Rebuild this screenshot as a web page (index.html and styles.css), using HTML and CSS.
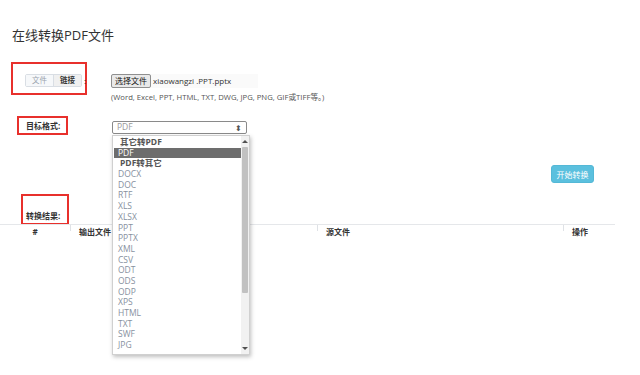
FILE: index.html
```html
<!DOCTYPE html>
<html lang="zh-CN">
<head>
  <meta charset="UTF-8" />
  <meta name="viewport" content="width=device-width, initial-scale=1.0" />
  <title>在线转换PDF文件</title>
  <link rel="stylesheet" href="styles.css">
</head>
<body>

  <h1 class="title">在线转换PDF文件</h1>

  <div class="row row-source">
    <div class="mark mark-source">
      <div class="tabs">
        <span class="tab">文件</span>
        <span class="tab active">链接</span>
      </div>
      <span class="colon">:</span>
    </div>
    <div class="field">
      <div class="file-input">
        <span class="file-btn">选择文件</span>
        <span class="file-name">xiaowangzi .PPT.pptx</span>
      </div>
      <p class="hint">(Word, Excel, PPT, HTML, TXT, DWG, JPG, PNG, GIF或TIFF等。)</p>
    </div>
  </div>

  <div class="row row-target">
    <div class="mark mark-target">
      <span class="label">目标格式:</span>
    </div>
    <div class="select-wrap">
      <div class="select">
        <span>PDF</span>
        <span class="arrows">&#x2B0D;</span>
      </div>

      <div class="dropdown">
        <ul class="options">
          <li class="group">其它转PDF</li>
          <li class="selected">PDF</li>
          <li class="group">PDF转其它</li>
          <li>DOCX</li>
          <li>DOC</li>
          <li>RTF</li>
          <li>XLS</li>
          <li>XLSX</li>
          <li>PPT</li>
          <li>PPTX</li>
          <li>XML</li>
          <li>CSV</li>
          <li>ODT</li>
          <li>ODS</li>
          <li>ODP</li>
          <li>XPS</li>
          <li>HTML</li>
          <li>TXT</li>
          <li>SWF</li>
          <li>JPG</li>
        </ul>
        <div class="scrollbar">
          <span class="sb-up"></span>
          <span class="sb-thumb"></span>
          <span class="sb-down"></span>
        </div>
      </div>
    </div>
  </div>

  <div class="actions">
    <button class="btn-start">开始转换</button>
  </div>

  <div class="mark mark-result">
    <span class="label">转换结果:</span>
  </div>

  <table class="result">
    <colgroup>
      <col class="w-num">
      <col class="w-out">
      <col class="w-src">
      <col class="w-op">
    </colgroup>
    <thead>
      <tr>
        <th class="c-num">#</th>
        <th>输出文件</th>
        <th>源文件</th>
        <th>操作</th>
      </tr>
    </thead>
    <tbody></tbody>
  </table>

</body>
</html>
```

FILE: styles.css
```css
html,
body {
  min-height: 100%;
}

body {
  margin: 0;
  min-height: 375px;
  font-family: "Open Sans", "Noto Sans CJK SC", sans-serif;
  font-size: 8px;
  line-height: 1.25;
  color: #333;
  background: #fff;
}

.title {
  margin: 25px 0 0 12px;
  font-family: "Open Sans", "Noto Sans CJK SC", sans-serif;
  font-size: 13px;
  line-height: 20px;
  font-weight: normal;
  color: #333;
}

.row {
  display: flex;
}

.mark {
  border: 2px solid #e8302c;
  box-sizing: border-box;
}

/* source row */
.row-source {
  margin-top: 17px;
}

.mark-source {
  margin-left: 11px;
  width: 76px;
  height: 33px;
  display: flex;
  align-items: flex-start;
  padding: 10px 0 0 12px;
}

.tabs {
  display: flex;
  border: 1px solid #d9dee4;
  border-radius: 2px;
  height: 13px;
  box-sizing: border-box;
}

.tab {
  width: 27px;
  font-size: 7.5px;
  line-height: 11px;
  text-align: center;
  color: #9aa3ad;
  background: #f6f8fa;
}

.tab.active {
  color: #333;
  background: #f0f0f0;
  border-left: 1px solid #d9dee4;
  font-weight: bold;
}

.colon {
  font-size: 8px;
  line-height: 13px;
  margin-left: 2px;
}

.field {
  margin-left: 24px;
  padding-top: 12px;
}

.file-input {
  display: flex;
  align-items: center;
  width: 147px;
  background: #fafafa;
  height: 14px;
}

.file-btn {
  height: 14px;
  box-sizing: border-box;
  padding: 0 3px;
  font-size: 8px;
  line-height: 12px;
  border: 1px solid #8f8f8f;
  border-radius: 2px;
  background: #e9e9e9;
  color: #111;
}

.file-name {
  margin-left: 2px;
  font-size: 8px;
  color: #333;
}

.hint {
  margin: 4px 0 0;
  font-size: 7.7px;
  line-height: 10px;
  color: #555;
}

/* target row */
.row-target {
  margin-top: 14px;
}

.mark-target {
  margin-left: 17px;
  width: 51px;
  height: 19px;
  padding: 3px 0 0 7px;
}

.label {
  display: block;
  font-size: 8px;
  line-height: 10px;
  font-weight: bold;
  color: #333;
}

.select-wrap {
  position: relative;
  margin-left: 44px;
  margin-top: 5px;
}

.select {
  width: 135px;
  height: 13px;
  box-sizing: border-box;
  border: 1px solid #8a8a8a;
  border-radius: 2px;
  display: flex;
  justify-content: space-between;
  align-items: center;
  padding: 0 4px;
  font-size: 8.5px;
  color: #999;
}

.arrows {
  font-size: 8px;
  color: #555;
}

.dropdown {
  position: absolute;
  top: 14px;
  left: 0;
  width: 136px;
  height: 218px;
  display: flex;
  background: #fff;
  border: 1px solid #d0d0d0;
  box-shadow: 1px 2px 4px rgba(0, 0, 0, 0.25);
  z-index: 5;
}

.options {
  list-style: none;
  margin: 0;
  padding: 1px 0 0 1px;
  flex: 1;
}

.options li {
  height: 10.7px;
  font-size: 8.5px;
  line-height: 10.7px;
  padding-left: 4px;
  color: #8791a0;
}

.options li.group {
  color: #555;
  font-weight: bold;
  padding-left: 6px;
}

.options li.selected {
  background: #6d6d6d;
  color: #fff;
}

.scrollbar {
  width: 8px;
  background: #f1f1f1;
  display: flex;
  flex-direction: column;
  align-items: center;
}

.sb-up,
.sb-down {
  width: 0;
  height: 0;
  border-left: 3px solid transparent;
  border-right: 3px solid transparent;
  margin: 4px 0;
}

.sb-up {
  border-bottom: 3px solid #505050;
}

.sb-down {
  border-top: 3px solid #505050;
  margin-top: auto;
}

.sb-thumb {
  width: 6px;
  height: 146px;
  background: #c1c1c1;
  border-radius: 1px;
}

/* actions */
.actions {
  display: flex;
  justify-content: flex-end;
  width: 594px;
  margin-top: 30px;
}

.btn-start {
  width: 43px;
  height: 18px;
  border: 1px solid #54b8d6;
  border-radius: 3px;
  background: #5bc0de;
  color: #fff;
  font-family: "Noto Sans CJK SC", sans-serif;
  font-size: 8px;
  padding: 0;
}

.mark-result {
  margin: 11px 0 0 21px;
  width: 48px;
  height: 31px;
  padding: 15px 0 0 3px;
}

/* table */
.result {
  width: 615px;
  table-layout: fixed;
  border-collapse: collapse;
  border-top: 1px solid #e5e7ea;
  margin-top: -1px;
}

.w-num { width: 70px; }
.w-out { width: 247px; }
.w-src { width: 246px; }
.w-op { width: 52px; }

.result th {
  position: relative;
  text-align: left;
  font-size: 8px;
  line-height: 10px;
  font-weight: bold;
  color: #333;
  height: 15px;
  padding: 2px 0 0 9px;
  vertical-align: top;
}

.result th + th::before {
  content: "";
  position: absolute;
  left: 0;
  top: 0;
  height: 6px;
  border-left: 1px solid #dfe2e6;
}

.result .c-num {
  text-align: center;
  padding-left: 0;
}
```
